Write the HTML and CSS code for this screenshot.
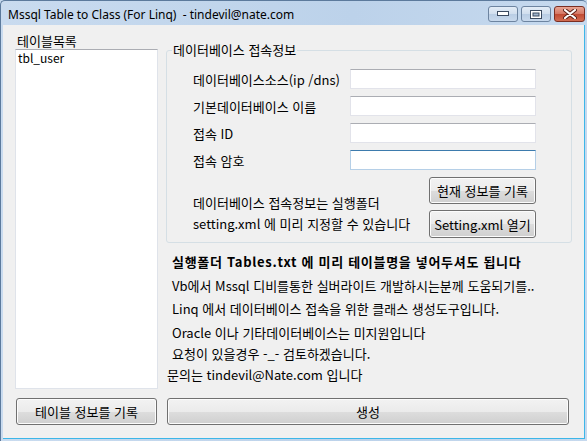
FILE: index.html
```html
<!DOCTYPE html>
<html lang="ko">
<head>
    <meta charset="UTF-8">
    <title>Mssql Table to Class (For Linq)</title>
    <link rel="stylesheet" href="styles.css">
</head>
<body>
    <div class="window">
        <div class="titlebar">
            <span class="title">Mssql Table to Class (For Linq)&nbsp; - tindevil@nate.com</span>
            <div class="caption-buttons">
                <span class="cap-btn">
                    <svg width="12" height="6" viewBox="0 0 12 6"><rect x="0.5" y="0.5" width="11" height="4" fill="#fff" stroke="#3a4a60"/></svg>
                </span>
                <span class="cap-btn">
                    <svg width="12" height="9" viewBox="0 0 12 9"><rect x="0.5" y="0.5" width="11" height="8" fill="#fff" stroke="#3a4a60"/><rect x="3" y="3" width="6" height="3" fill="#9fb4cc" stroke="#3a4a60" stroke-width="1"/></svg>
                </span>
                <span class="cap-btn cap-close">
                    <svg width="14" height="10" viewBox="0 0 14 10"><path d="M2 1 L12 9 M12 1 L2 9" stroke="#5a2118" stroke-width="4" stroke-linecap="round"/><path d="M2 1 L12 9 M12 1 L2 9" stroke="#fff" stroke-width="2.2" stroke-linecap="round"/></svg>
                </span>
            </div>
        </div>
        <div class="client">
            <div class="main">
                <div class="table-list">
                    <div class="list-label">테이블목록</div>
                    <div class="listbox">
                        <div class="list-item">tbl_user</div>
                    </div>
                </div>
                <div class="info">
                    <fieldset class="groupbox">
                        <legend>데이터베이스 접속정보</legend>
                        <div class="group-body">
                            <div class="form-rows">
                                <label>데이터베이스소스(ip /dns)</label>
                                <input class="textbox" type="text">
                                <label>기본데이터베이스 이름</label>
                                <input class="textbox" type="text">
                                <label>접속 ID</label>
                                <input class="textbox" type="text">
                                <label>접속 암호</label>
                                <input class="textbox textbox-focus" type="text">
                            </div>
                            <div class="group-footer">
                                <div class="group-note">
                                    <div>데이터베이스 접속정보는 실행폴더</div>
                                    <div>setting.xml 에 미리 지정할 수 있습니다</div>
                                </div>
                                <div class="side-buttons">
                                    <button class="btn btn-side">현재 정보를 기록</button>
                                    <button class="btn btn-side">Setting.xml 열기</button>
                                </div>
                            </div>
                        </div>
                    </fieldset>
                    <div class="notes">
                        <div class="note note-bold">실행폴더 Tables.txt 에 미리 테이블명을 넣어두셔도 됩니다</div>
                        <div class="note note-2">Vb에서 Mssql 디비를통한 실버라이트 개발하시는분께 도움되기를..</div>
                        <div class="note note-3">Linq 에서 데이터베이스 접속을 위한 클래스 생성도구입니다.</div>
                        <div class="note note-4">Oracle 이나 기타데이터베이스는 미지원입니다</div>
                        <div class="note note-5">요청이 있을경우 -_- 검토하겠습니다.</div>
                        <div class="note note-6">문의는 tindevil@Nate.com 입니다</div>
                    </div>
                </div>
            </div>
            <div class="bottom-bar">
                <button class="btn btn-tables">테이블 정보를 기록</button>
                <button class="btn btn-generate">생성</button>
            </div>
        </div>
    </div>
</body>
</html>
```

FILE: styles.css
```css
body {
    margin: 0;
    padding: 0;
    background: #c4d8ed;
    font-family: "Noto Sans CJK KR", sans-serif;
    font-size: 13px;
    color: #000;
    overflow: hidden;
}

.window {
    width: 587px;
    height: 441px;
    box-sizing: border-box;
    display: flex;
    flex-direction: column;
    background: linear-gradient(to right, #c9dbef, #bcd2ea 60%, #c6d9ee);
    border-left: 1px solid #5c7a9c;
    border-top: 1px solid #5c7a9c;
    border-radius: 5px 5px 0 0;
    padding: 0 2px 2px 2px;
}

.titlebar {
    height: 24px;
    display: flex;
    align-items: flex-start;
}

.title {
    font-family: "Noto Sans", sans-serif;
    font-size: 12px;
    line-height: 16px;
    margin: 6px 0 0 5px;
    white-space: nowrap;
}

.caption-buttons {
    margin-left: auto;
    margin-top: 5px;
    display: flex;
    gap: 3px;
}

.cap-btn {
    width: 30px;
    height: 16px;
    box-sizing: border-box;
    border: 1px solid #6d84a0;
    border-radius: 3px;
    background: linear-gradient(#e3ecf6, #d0deee 50%, #b9cde4 51%, #c8d9ed);
    display: flex;
    align-items: center;
    justify-content: center;
}

.cap-close {
    width: 31px;
    border-color: #7b2e22;
    background: linear-gradient(#e8a493, #d47764 50%, #c14a33 51%, #d16c52);
}

.client {
    flex: 1;
    display: flex;
    flex-direction: column;
    background: #f0f0f0;
    border-right: 1px solid #3cb6e8;
    border-bottom: 1px solid #3cb6e8;
}

.main {
    flex: 1;
    display: flex;
    padding-top: 8px;
}

.table-list {
    width: 143px;
    margin-left: 12px;
}

.list-label {
    line-height: 16px;
    padding-left: 2px;
}

.listbox {
    height: 338px;
    background: #fff;
    border: 1px solid #dfe3ea;
    border-top-color: #abadb3;
}

.list-item {
    font-size: 12px;
    line-height: 14px;
    padding: 1px 2px;
}

.info {
    width: 406px;
    margin-left: 8px;
    margin-top: 9px;
}

.groupbox {
    margin: 0;
    padding: 0;
    border: 1px solid #d5dfe5;
    border-radius: 3px;
}

.groupbox legend {
    padding: 0 1px;
    margin-left: 5px;
    line-height: 16px;
}

.group-body {
    padding: 11px 35px 4px 26px;
}

.form-rows {
    display: grid;
    grid-template-columns: 157px 186px;
    row-gap: 7px;
    align-items: center;
}

.form-rows label {
    line-height: 16px;
    margin-top: 2px;
}

.textbox {
    height: 20px;
    width: 186px;
    box-sizing: border-box;
    margin: 0;
    border: 1px solid #e2e3ea;
    border-top-color: #abadb3;
    background: #fff;
}

.textbox-focus {
    border-color: #b5cfe7;
    border-top-color: #3d7bad;
}

.group-footer {
    display: flex;
    align-items: flex-end;
    margin-top: 7px;
}

.group-note {
    line-height: 21px;
    margin-bottom: 4px;
    white-space: nowrap;
}

.side-buttons {
    margin-left: auto;
    display: flex;
    flex-direction: column;
    gap: 6px;
}

.btn {
    font-family: "Noto Sans CJK KR", sans-serif;
    font-size: 13px;
    color: #000;
    height: 27px;
    padding: 0;
    border: 1px solid #707070;
    border-radius: 3px;
    background: linear-gradient(#f2f2f2, #ebebeb 50%, #dddddd 51%, #cfcfcf);
    box-shadow: inset 0 0 0 1px #fcfcfc;
}

.btn-side {
    width: 107px;
}

.btn-side + .btn-side {
    height: 28px;
}

.notes {
    line-height: 16px;
}

.note {
    padding-left: 6px;
    white-space: nowrap;
}

.note-bold {
    font-weight: bold;
    letter-spacing: 0.7px;
    margin-top: 11px;
}

.note-2 { margin-top: 8px; }
.note-3 { margin-top: 7px; }
.note-4 { margin-top: 8px; }
.note-5 { margin-top: 5px; }

.note-6 {
    margin-top: 5px;
    padding-left: 1px;
}

.bottom-bar {
    display: flex;
    padding: 0 0 13px 13px;
    gap: 10px;
}

.btn-tables {
    width: 141px;
}

.btn-generate {
    width: 402px;
}
```
